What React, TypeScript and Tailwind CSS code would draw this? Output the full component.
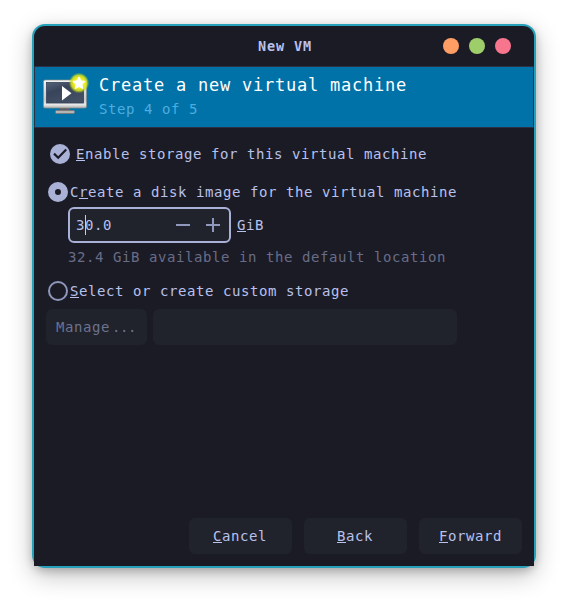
import type { ReactNode } from "react";

const mono = "font-['DejaVu_Sans_Mono','Liberation_Mono',monospace]";

function Label({ k, pre = "", children }: { k: string; pre?: string; children: ReactNode }) {
  return (
    <span className="whitespace-pre">
      {pre}
      <span className="underline decoration-1 underline-offset-1 [text-decoration-skip-ink:none]">{k}</span>
      {children}
    </span>
  );
}

function MachineIcon() {
  return (
    <svg width="50" height="46" viewBox="0 0 50 46" className="block shrink-0">
      <defs>
        <linearGradient id="frame" x1="0" y1="0" x2="0" y2="1">
          <stop offset="0" stopColor="#f4f4f4" />
          <stop offset="0.7" stopColor="#c9c9c9" />
          <stop offset="0.88" stopColor="#e8e8e8" />
          <stop offset="1" stopColor="#b0b0b0" />
        </linearGradient>
        <linearGradient id="screen" x1="0" y1="0" x2="0.6" y2="1">
          <stop offset="0" stopColor="#566377" />
          <stop offset="0.4" stopColor="#37445a" />
          <stop offset="1" stopColor="#434f63" />
        </linearGradient>
        <radialGradient id="glow">
          <stop offset="0.5" stopColor="#eef01e" />
          <stop offset="0.75" stopColor="#dbe31c" stopOpacity="0.85" />
          <stop offset="1" stopColor="#8fc31f" stopOpacity="0" />
        </radialGradient>
      </defs>
      <path d="M19 35h10v5H19z" fill="#5c5e61" />
      <rect x="14.5" y="38.5" width="19" height="3" rx="1" fill="#b5b5b5" stroke="#777" strokeWidth="0.8" />
      <rect x="2.5" y="8" width="43" height="28" rx="1.5" fill="url(#frame)" stroke="#8a8c8d" strokeWidth="0.7" />
      <rect x="5.5" y="10.5" width="37" height="20.5" fill="url(#screen)" stroke="#34435a" strokeWidth="0.8" />
      <path d="M21 14l9.5 7.2L21 28.5z" fill="#fff" />
      <circle cx="38" cy="11" r="10.4" fill="url(#glow)" />
      <path d="M38 4.9l1.9 3.9 4.2.6-3.1 3 .8 4.2-3.8-2-3.8 2 .8-4.2-3.1-3 4.2-.6z" fill="#fff" stroke="#fff" strokeLinejoin="round" />
    </svg>
  );
}

export default function App() {
  return (
    <div className={`h-[608px] w-[568px] overflow-hidden bg-white pt-6 pl-8 text-[14px] leading-5 tracking-[0.572px] text-[#b8c1ec] ${mono}`}>
      <div className="h-[544px] w-[504px] rounded-[13px] border-2 border-[#27a1b9] bg-[#27a1b9] shadow-[0_3px_8px_rgba(0,0,0,0.2),0_8px_24px_rgba(0,0,0,0.24)]">
        <div className="flex h-full flex-col rounded-t-[11px] bg-[#1b1b26]">
          <header className="grid h-10 shrink-0 grid-cols-[1fr_auto_1fr] items-center text-[13.5px] font-bold tracking-[0.873px]">
            <span />
            <span className="pl-0.5">New VM</span>
            <div className="flex justify-end gap-2.5 pr-[23px]">
              <span className="size-4 rounded-full bg-[#ff9e64]" />
              <span className="size-4 rounded-full bg-[#9ece6a]" />
              <span className="size-4 rounded-full bg-[#f7768e]" />
            </div>
          </header>

          <section className="flex h-[62px] shrink-0 border border-[#2b3247] bg-[#0072a8] pt-[5px] pl-[6px]">
            <MachineIcon />
            <div className="pt-px pl-2">
              <h1 className="h-6 text-[17px] leading-6 tracking-[0.766px] whitespace-pre text-white">Create a new virtual machine</h1>
              <p className="mt-0.5 leading-5 text-[#4dade0]">Step 4 of 5</p>
            </div>
          </section>

          <main className="flex-1 pt-4 pl-3">
            <div className="flex h-5 items-center pl-1">
              <svg width="20" height="20" viewBox="0 0 20 20" className="mr-1.5">
                <circle cx="10" cy="10" r="10" fill="#a9b1d6" />
                <path d="M4 9.6l4.2 4.2 8-8.4" fill="none" stroke="#1b1b26" strokeWidth="2.2" />
              </svg>
              <Label k="E">nable storage for this virtual machine</Label>
            </div>
            <div className="mt-[18px] flex h-5 items-center gap-0.5 pl-0.5">
              <span className="size-5 rounded-full border-[7px] border-[#a9b1d6]" />
              <Label pre="C" k="r">eate a disk image for the virtual machine</Label>
            </div>
            <div className="mt-[5px] ml-[22px] flex items-center gap-1.5">
              <div className="flex h-9 w-[163px] items-center rounded-md border-2 border-[#a9b1d6] bg-[#20222c] pl-1.5">
                <span className="relative">
                  30.0
                  <span className="absolute top-0 left-[9px] h-5 w-px bg-[#c0caf5]" />
                </span>
                <svg width="44" height="14" viewBox="0 0 44 14" className="mr-[9px] ml-auto" fill="#9098bd">
                  <path d="M0 6h14v2H0zM30 6h14v2H30z" />
                  <path d="M36 0h2v14h-2z" />
                </svg>
              </div>
              <Label k="G">iB</Label>
            </div>
            <p className="mt-1 ml-[22px] h-5 text-[#686d87]">32.4 GiB available in the default location</p>
            <div className="mt-3.5 flex h-5 items-center gap-0.5 pl-0.5">
              <span className="size-5 rounded-full border-2 border-[#8f98bb]" />
              <Label k="S">elect or create custom storage</Label>
            </div>
            <div className="mt-2 flex gap-1.5">
              <div className="flex h-9 w-[101px] items-center rounded-md bg-[#20222c] pl-2.5 text-[#6c7290]">
                Manage<span className="pl-0.5 tracking-[-0.43px]">...</span>
              </div>
              <div className="h-9 w-[304px] rounded-md bg-[#20222c]" />
            </div>
          </main>

          <footer className="flex h-12 shrink-0 justify-end gap-3 pr-3">
            <button className="h-9 w-[103px] rounded-md bg-[#20222c] pr-px"><Label k="C">ancel</Label></button>
            <button className="h-9 w-[103px] rounded-md bg-[#20222c] pr-px"><Label k="B">ack</Label></button>
            <button className="h-9 w-[103px] rounded-md bg-[#20222c]"><Label k="F">orward</Label></button>
          </footer>
        </div>
      </div>
    </div>
  );
}
